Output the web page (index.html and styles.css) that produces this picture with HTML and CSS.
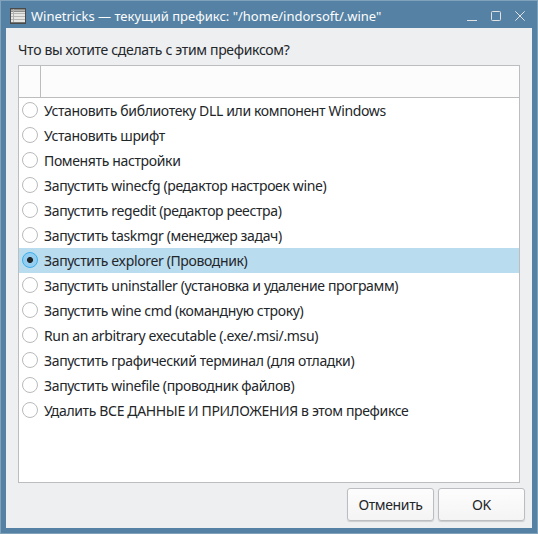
FILE: index.html
```
<!DOCTYPE html>
<html lang="ru">

<head>
	<meta charset="UTF-8">
	<title>Winetricks</title>
	<link rel="stylesheet" href="styles.css">
</head>

<body>
	<div class="window">
		<header class="titlebar">
			<svg class="app-icon" width="16" height="16" viewBox="0 0 16 16" shape-rendering="crispEdges">
				<rect width="16" height="16" fill="#4a4a48" />
				<rect x="1" y="1" width="14" height="14" fill="#e6e6e4" />
				<path d="M1 1.5h14M1 3.5h14" stroke="#8c8c8a" />
				<path d="M1 2.5h14M1 5.5h14M1 8.5h14M1 11.5h14" stroke="#b5b5b3" />
				<path d="M3.5 1v14" stroke="#b0b0ae" />
				<path d="M1 14.5h14" stroke="#777775" />
			</svg>
			<span class="title">Winetricks — текущий префикс: "/home/indorsoft/.wine"</span>
			<div class="controls">
				<svg width="10" height="10" viewBox="0 0 10 10"><path d="M0 9.5h10" /></svg>
				<svg width="10" height="10" viewBox="0 0 10 10"><rect x=".5" y=".5" width="9" height="9" rx="1" /></svg>
				<svg width="10" height="10" viewBox="0 0 10 10"><path d="M.3.3l9.4 9.4M9.7.3L.3 9.7" /></svg>
			</div>
		</header>
		<main>
			<p class="question">Что вы хотите сделать с этим префиксом?</p>
			<div class="list">
				<div class="list-head"></div>
				<label><input type="radio" name="action"> Установить библиотеку DLL или компонент Windows</label>
				<label><input type="radio" name="action"> Установить шрифт</label>
				<label><input type="radio" name="action"> Поменять настройки</label>
				<label><input type="radio" name="action"> Запустить winecfg (редактор настроек wine)</label>
				<label><input type="radio" name="action"> Запустить regedit (редактор реестра)</label>
				<label><input type="radio" name="action"> Запустить taskmgr (менеджер задач)</label>
				<label class="selected"><input type="radio" name="action" checked> Запустить explorer (Проводник)</label>
				<label><input type="radio" name="action"> Запустить uninstaller (установка и удаление программ)</label>
				<label><input type="radio" name="action"> Запустить wine cmd (командную строку)</label>
				<label><input type="radio" name="action"> Run an arbitrary executable (.exe/.msi/.msu)</label>
				<label><input type="radio" name="action"> Запустить графический терминал (для отладки)</label>
				<label><input type="radio" name="action"> Запустить winefile (проводник файлов)</label>
				<label><input type="radio" name="action"> Удалить ВСЕ ДАННЫЕ И ПРИЛОЖЕНИЯ в этом префиксе</label>
			</div>
			<div class="buttons">
				<button type="button">Отменить</button>
				<button type="button">OK</button>
			</div>
		</main>
	</div>
</body>

</html>
```

FILE: styles.css
```
* {
	box-sizing: border-box;
}

body {
	margin: 0;
	font-family: "Noto Sans", sans-serif;
	font-size: 14px;
	letter-spacing: -.36px;
	color: #232629;
}

.window {
	display: flex;
	flex-direction: column;
	width: 538px;
	height: 534px;
	padding: 0 5px 5px;
	background: #5582a4;
	border: 1px solid #81a2bb;
}

.titlebar {
	flex: none;
	display: flex;
	align-items: center;
	height: 27px;
	padding: 3px 7px 0 4px;
	color: #fcfcfc;
}

.titlebar .title {
	margin-left: 5px;
	font-size: 13px;
	letter-spacing: 0;
	line-height: 18px;
	white-space: nowrap;
}

.controls {
	display: flex;
	gap: 14px;
	margin-left: auto;
}

.controls svg {
	display: block;
	fill: none;
	stroke: #e0e2e4;
}

main {
	flex: 1;
	display: flex;
	flex-direction: column;
	padding: 12px 7px 6px 12px;
	background: #eeeff1;
}

.question {
	margin: 0 0 6px;
	height: 19px;
	line-height: 20px;
	letter-spacing: -.33px;
}

.list {
	width: 502px;
	height: 418px;
	background: #ffffff;
	border: 1px solid #bbbdbf;
}

.list-head {
	height: 32px;
	padding-left: 21px;
	background: #fcfcfc;
	border-bottom: 1px solid #bbbdbf;
}

.list-head:before {
	content: "";
	display: block;
	width: 1px;
	height: 100%;
	background: #bbbdbf;
}

.list label {
	display: flex;
	align-items: center;
	height: 25px;
	padding-left: 3px;
	line-height: 25px;
	white-space: nowrap;
}

.list label.selected {
	background: #badcef;
}

.list input {
	appearance: none;
	flex: none;
	width: 16px;
	height: 16px;
	margin: 0 6px 1px 0;
	background: #ffffff;
	border: 1px solid #b8babc;
	border-radius: 50%;
}

.list input:checked {
	background: radial-gradient(circle, #232629 2.6px, #93cef0 3.4px);
	border-color: #3daee9;
}

.buttons {
	display: flex;
	justify-content: flex-end;
	gap: 4px;
	margin-top: 5px;
}

.buttons button {
	width: 87px;
	height: 33px;
	padding: 0;
	font: inherit;
	letter-spacing: inherit;
	color: inherit;
	background: linear-gradient(#fdfdfd, #f4f4f5);
	border: 1px solid #bbbdc0;
	border-radius: 3px;
	box-shadow: 0 1px 1px rgba(0, 0, 0, .15);
}
```
